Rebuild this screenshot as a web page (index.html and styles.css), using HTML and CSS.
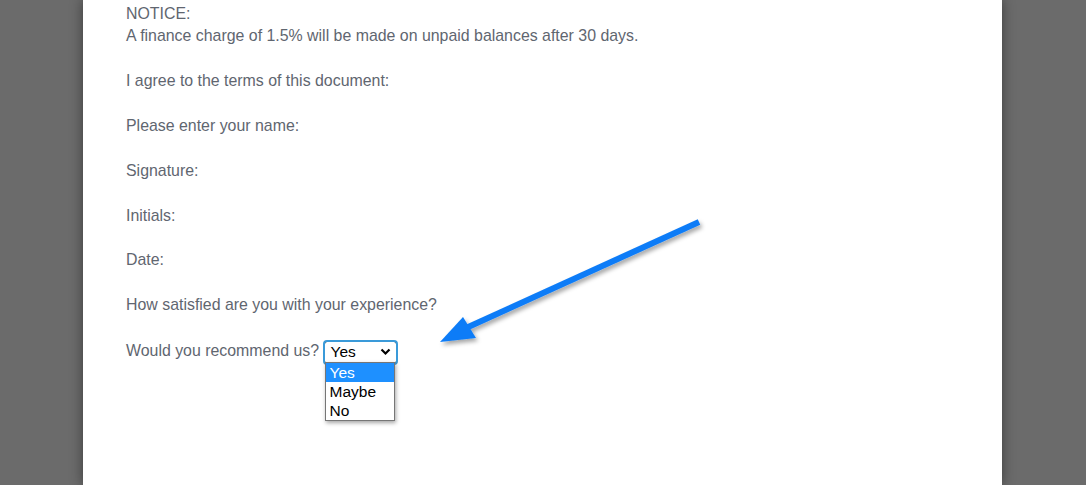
FILE: index.html
```html
<!DOCTYPE html>
<html lang="en">
<head>
  <meta charset="UTF-8" />
  <title>Document</title>
  <link rel="stylesheet" href="styles.css">
</head>
<body>
  <div class="sheet">
    <p>NOTICE:<br>A finance charge of 1.5% will be made on unpaid balances after 30 days.</p>
    <p>I agree to the terms of this document:</p>
    <p>Please enter your name:</p>
    <p>Signature:</p>
    <p>Initials:</p>
    <p>Date:</p>
    <p>How satisfied are you with your experience?</p>
    <p class="question">Would you recommend us?
      <span class="select">
        <span class="select-value">Yes</span>
        <svg class="chevron" width="11" height="8" viewBox="0 0 11 8"><path d="M1.5 1.5 L5.5 5.5 L9.5 1.5" fill="none" stroke="#000" stroke-width="2.2"/></svg>
        <span class="options">
          <span class="option selected">Yes</span>
          <span class="option">Maybe</span>
          <span class="option">No</span>
        </span>
      </span>
    </p>
  </div>

  <svg class="arrow" width="1086" height="485" viewBox="0 0 1086 485">
    <defs>
      <filter id="shadow" x="-10%" y="-10%" width="130%" height="140%">
        <feDropShadow dx="2" dy="3" stdDeviation="2" flood-color="#000" flood-opacity="0.35"/>
      </filter>
    </defs>
    <g filter="url(#shadow)" fill="#0d7cf7">
      <line x1="699" y1="222" x2="466" y2="328" stroke="#0d7cf7" stroke-width="6"/>
      <polygon points="440,342 463,317 476,338"/>
    </g>
  </svg>
</body>
</html>
```

FILE: styles.css
```css
body {
  margin: 0;
  background: #6b6b6b;
  font-family: "Liberation Sans", Arial, sans-serif;
  height: 485px;
  overflow: hidden;
}

.sheet {
  margin-left: 83px;
  width: 919px;
  height: 485px;
  box-sizing: border-box;
  padding: 3px 0 0 43px;
  background: #fff;
  box-shadow: 0 0 12px rgba(0, 0, 0, 0.45);
  color: #5f6670;
  font-size: 15.9px;
  line-height: 22.4px;
}

.sheet p {
  margin: 0 0 22.4px;
}

.question {
  position: relative;
}

.select {
  display: inline-flex;
  align-items: center;
  justify-content: space-between;
  position: relative;
  width: 73px;
  height: 23px;
  box-sizing: border-box;
  margin: 2px 0 0 0;
  padding: 0 5px 0 6px;
  border: 1px solid #333;
  border-radius: 3px;
  outline: 2px solid #3a9ad9;
  outline-offset: -1px;
  background: #fff;
  color: #000;
  font-size: 15.5px;
  vertical-align: middle;
  line-height: 20px;
}

.chevron {
  display: block;
}

.options {
  position: absolute;
  left: 0;
  top: 20px;
  width: 70px;
  box-sizing: border-box;
  border: 1px solid #767676;
  background: #fff;
  box-shadow: 1px 2px 4px rgba(0, 0, 0, 0.35);
  display: flex;
  flex-direction: column;
}

.option {
  height: 19px;
  line-height: 19px;
  padding-left: 4px;
  color: #000;
}

.option.selected {
  background: #1e90ff;
  color: #fff;
}

.arrow {
  position: absolute;
  left: 0;
  top: 0;
  pointer-events: none;
}
```
